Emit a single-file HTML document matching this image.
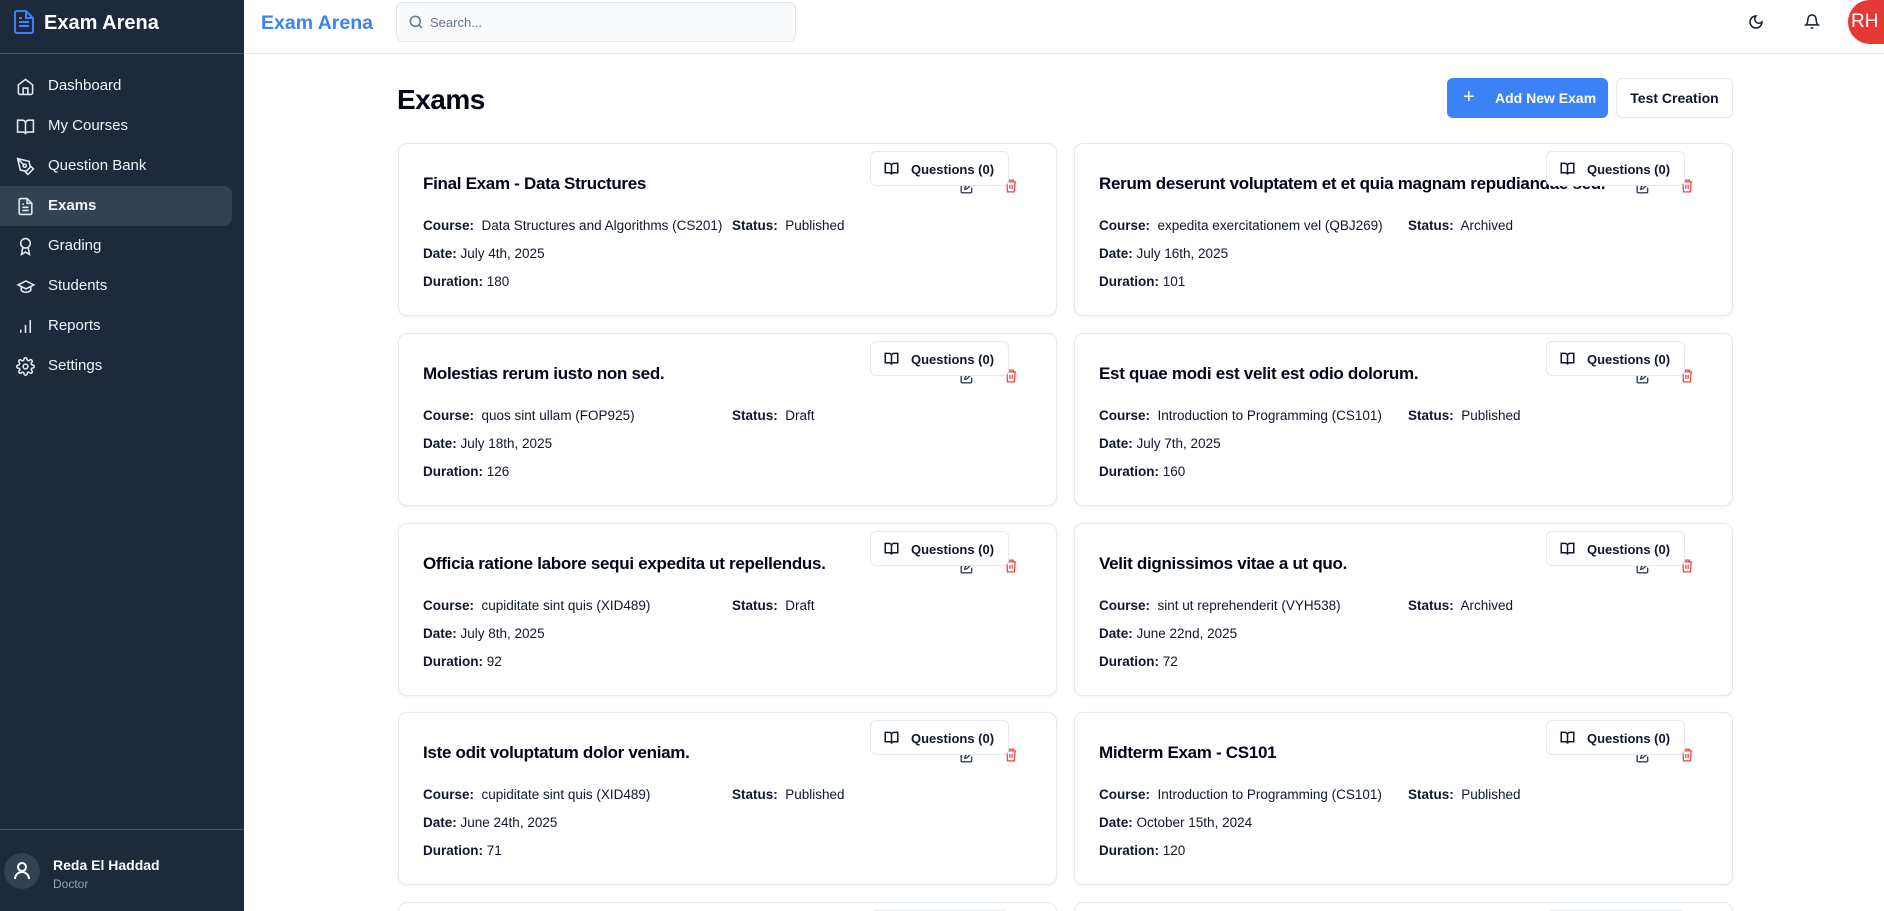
<!DOCTYPE html>
<html style="width:1884px;height:911px;overflow:hidden"><head><meta charset="utf-8"><style>
*{box-sizing:border-box;margin:0;padding:0}
body{width:1884px;height:911px;overflow:hidden;font-family:"Liberation Sans",sans-serif;background:#fff;position:relative;color:#0f172a}
#wrap{position:absolute;left:0;top:0;width:1884px;height:911px;overflow:hidden}
.sb{position:absolute;left:0;top:0;width:244px;height:911px;background:#1e293b;color:#f1f5f9}
.sb .logo{position:absolute;left:0;top:0;width:244px;height:54px;border-bottom:1px solid #475569}
.sb .logo span{position:absolute;left:44px;top:12px;font-size:20px;font-weight:bold;color:#fff}
.nav{position:absolute;left:0;width:232px;height:40px}
.nav svg{position:absolute;left:16px;top:11px}
.nav span{position:absolute;left:48px;top:11px;font-size:15px;color:#f1f5f9}
.nav.act{background:#334155;border-radius:0 8px 8px 0}
.nav.act span{font-weight:bold}
.foot{position:absolute;left:0;top:829px;width:244px;border-top:1px solid #475569;height:82px}
.hdr{position:absolute;left:244px;top:0;width:1640px;height:54px;border-bottom:1px solid #e2e8f0}
.search{position:absolute;left:396px;top:2px;width:400px;height:40px;background:#f8fafc;border:1px solid #e2e8f0;border-radius:7px}
.card{position:absolute;width:659px;height:173px;border:1px solid #e2e8f0;border-radius:9px;box-shadow:0 1px 3px rgba(0,0,0,.06);background:#fff;overflow:hidden}
.card.last{height:9px;border-bottom:none;border-radius:9px 9px 0 0;box-shadow:none}
.card h3{position:absolute;left:24px;top:30px;font-size:17px;font-weight:bold;letter-spacing:-.3px;white-space:nowrap;color:#020617}
.card .r{position:absolute;left:24px;font-size:13.5px;white-space:nowrap;color:#0f172a}
.card b{font-weight:bold}
.card .st{position:absolute;left:333px;top:74px;font-size:13.5px}
.qb{position:absolute;left:471px;top:7px;width:139px;height:35px;border:1px solid #e2e8f0;border-radius:6px;background:#fff;font-size:13px;font-weight:bold;z-index:2}
.qb svg{position:absolute;left:13px;top:10px}
.qb span{position:absolute;left:40px;top:10px}
.ed{position:absolute;left:561px;top:36px}
.tr{position:absolute;left:605px;top:34px}
</style></head><body><div id="wrap">
<div class="sb">
 <div class="logo"><svg style="position:absolute;left:14px;top:10px" width="20" height="24" viewBox="0 0 20 24" fill="none" stroke="#3b82f6" stroke-width="2"><path d="M12 1H3a2 2 0 0 0-2 2v18a2 2 0 0 0 2 2h14a2 2 0 0 0 2-2V8z"/><path d="M12 1v7h7M5 12h10M5 16h10M5 8h3"/></svg><span>Exam Arena</span></div>
 <div class="nav" style="top:66px"><svg width="19" height="19" viewBox="0 0 24 24" fill="none" stroke="#e2e8f0" stroke-width="2"><path d="M3 10l9-7 9 7v10a2 2 0 0 1-2 2H5a2 2 0 0 1-2-2z"/><path d="M9 22v-8h6v8"/></svg><span>Dashboard</span></div>
 <div class="nav" style="top:106px"><svg width="19" height="19" viewBox="0 0 24 24" fill="none" stroke="#e2e8f0" stroke-width="2"><path d="M2 4h6a4 4 0 0 1 4 4v14a3 3 0 0 0-3-3H2zM22 4h-6a4 4 0 0 0-4 4v14a3 3 0 0 1 3-3h7z"/></svg><span>My Courses</span></div>
 <div class="nav" style="top:146px"><svg width="19" height="19" viewBox="0 0 24 24" fill="none" stroke="#e2e8f0" stroke-width="2"><path d="M12 19l7-7 3 3-7 7zM18 13l-1.5-7.5L2 2l3.5 14.5L13 18zM2 2l7.6 7.6"/><circle cx="11" cy="11" r="2"/></svg><span>Question Bank</span></div>
 <div class="nav act" style="top:186px"><svg width="19" height="19" viewBox="0 0 24 24" fill="none" stroke="#e2e8f0" stroke-width="2"><path d="M14 2H6a2 2 0 0 0-2 2v16a2 2 0 0 0 2 2h12a2 2 0 0 0 2-2V8z"/><path d="M14 2v6h6M16 13H8M16 17H8M10 9H8"/></svg><span>Exams</span></div>
 <div class="nav" style="top:226px"><svg width="19" height="19" viewBox="0 0 24 24" fill="none" stroke="#e2e8f0" stroke-width="2"><circle cx="12" cy="8" r="6"/><path d="M15.5 13.5L17 22l-5-3-5 3 1.5-8.5"/></svg><span>Grading</span></div>
 <div class="nav" style="top:266px"><svg width="20" height="19" viewBox="0 0 24 24" fill="none" stroke="#e2e8f0" stroke-width="2"><path d="M22 10L12 5 2 10l10 5 10-5zM6 12v5c3 3 9 3 12 0v-5"/></svg><span>Students</span></div>
 <div class="nav" style="top:306px"><svg width="19" height="19" viewBox="0 0 24 24" fill="none" stroke="#e2e8f0" stroke-width="2"><path d="M18 20V4M12 20V10M6 20v-4"/></svg><span>Reports</span></div>
 <div class="nav" style="top:346px"><svg width="19" height="19" viewBox="0 0 24 24" fill="none" stroke="#e2e8f0" stroke-width="2"><circle cx="12" cy="12" r="3"/><path d="M19.4 15a1.7 1.7 0 0 0 .3 1.8l.1.1a2 2 0 1 1-2.8 2.8l-.1-.1a1.7 1.7 0 0 0-1.8-.3 1.7 1.7 0 0 0-1 1.5V21a2 2 0 1 1-4 0v-.1a1.7 1.7 0 0 0-1.1-1.5 1.7 1.7 0 0 0-1.8.3l-.1.1a2 2 0 1 1-2.8-2.8l.1-.1a1.7 1.7 0 0 0 .3-1.8 1.7 1.7 0 0 0-1.5-1H3a2 2 0 1 1 0-4h.1a1.7 1.7 0 0 0 1.5-1.1 1.7 1.7 0 0 0-.3-1.8l-.1-.1a2 2 0 1 1 2.8-2.8l.1.1a1.7 1.7 0 0 0 1.8.3H9a1.7 1.7 0 0 0 1-1.5V3a2 2 0 1 1 4 0v.1a1.7 1.7 0 0 0 1 1.5 1.7 1.7 0 0 0 1.8-.3l.1-.1a2 2 0 1 1 2.8 2.8l-.1.1a1.7 1.7 0 0 0-.3 1.8V9a1.7 1.7 0 0 0 1.5 1H21a2 2 0 1 1 0 4h-.1a1.7 1.7 0 0 0-1.5 1z"/></svg><span>Settings</span></div>
 <div class="foot">
  <div style="position:absolute;left:4px;top:23px;width:36px;height:36px;border-radius:50%;background:#334155"><svg style="position:absolute;left:10px;top:9px" width="16" height="18" viewBox="0 0 16 18" fill="none" stroke="#fff" stroke-width="2"><circle cx="8" cy="5" r="4"/><path d="M1 17a7 7 0 0 1 14 0"/></svg></div>
  <div style="position:absolute;left:53px;top:27px;font-size:14px;font-weight:bold;color:#fff">Reda El Haddad</div>
  <div style="position:absolute;left:53px;top:47px;font-size:12px;color:#94a3b8">Doctor</div>
 </div>
</div>
<div class="hdr">
 <div style="position:absolute;left:17px;top:12px;font-size:19.5px;font-weight:bold;color:#3b82f6">Exam Arena</div>
</div>
<div class="search"><svg style="position:absolute;left:11px;top:11px" width="16" height="16" viewBox="0 0 24 24" fill="none" stroke="#64748b" stroke-width="2.3"><circle cx="11" cy="11" r="7.5"/><path d="M21 21l-4.5-4.5"/></svg><span style="position:absolute;left:33px;top:12px;font-size:13px;color:#64748b">Search...</span></div>
<svg style="position:absolute;left:1748px;top:14px" width="16" height="16" viewBox="0 0 24 24" fill="none" stroke="#0f172a" stroke-width="2.2"><path d="M12 3a6 6 0 0 0 9 9 9 9 0 1 1-9-9z"/></svg>
<svg style="position:absolute;left:1804px;top:13px" width="16" height="17" viewBox="0 0 24 24" fill="none" stroke="#0f172a" stroke-width="2.2"><path d="M6 8a6 6 0 0 1 12 0c0 7 3 9 3 9H3s3-2 3-9M10.3 21a1.9 1.9 0 0 0 3.4 0"/></svg>
<div style="position:absolute;left:1848px;top:0px;width:36px;height:44px;border-radius:22px 0 0 22px;background:#e53935;color:#fff;font-size:19px;line-height:44px;padding-left:3px;overflow:hidden;white-space:nowrap">RH</div>
<div style="position:absolute;left:397px;top:84px;font-size:28px;font-weight:bold;color:#020617;letter-spacing:-.5px">Exams</div>
<div style="position:absolute;left:1447px;top:78px;width:161px;height:40px;background:#3b82f6;border-radius:6px;color:#fff;font-size:14px;font-weight:bold"><span style="position:absolute;left:16px;top:8px;font-size:20px;font-weight:normal">+</span><span style="position:absolute;left:48px;top:12px">Add New Exam</span></div>
<div style="position:absolute;left:1616px;top:78px;width:117px;height:40px;border:1px solid #e2e8f0;border-radius:6px;font-size:14px;font-weight:bold;text-align:center;line-height:38px">Test Creation</div>

<div id="cards"></div>
</div>
<script>
var d=[
["Final Exam - Data Structures","Data Structures and Algorithms (CS201)","Published","July 4th, 2025","180"],
["Rerum deserunt voluptatem et et quia magnam repudiandae sed.","expedita exercitationem vel (QBJ269)","Archived","July 16th, 2025","101"],
["Molestias rerum iusto non sed.","quos sint ullam (FOP925)","Draft","July 18th, 2025","126"],
["Est quae modi est velit est odio dolorum.","Introduction to Programming (CS101)","Published","July 7th, 2025","160"],
["Officia ratione labore sequi expedita ut repellendus.","cupiditate sint quis (XID489)","Draft","July 8th, 2025","92"],
["Velit dignissimos vitae a ut quo.","sint ut reprehenderit (VYH538)","Archived","June 22nd, 2025","72"],
["Iste odit voluptatum dolor veniam.","cupiditate sint quis (XID489)","Published","June 24th, 2025","71"],
["Midterm Exam - CS101","Introduction to Programming (CS101)","Published","October 15th, 2024","120"],
["","","","",""],["","","","",""]];
var tops=[143,333,523,712,902],h="";
d.forEach(function(c,i){var x=i%2?1074:398,y=tops[i>>1];
h+='<div class="card'+(c[0]?'':' last')+'" style="left:'+x+'px;top:'+y+'px">'+
'<div class="qb"><svg width="15" height="14" viewBox="0 0 24 22" fill="none" stroke="#0f172a" stroke-width="2.4"><path d="M2 2h6a4 4 0 0 1 4 4v14a3 3 0 0 0-3-3H2zM22 2h-6a4 4 0 0 0-4 4v14a3 3 0 0 1 3-3h7z"/></svg><span>Questions (0)</span></div>'+
(c[0]?'<h3>'+c[0]+'</h3>'+
'<svg class="ed" width="14" height="14" viewBox="0 0 24 24" fill="none" stroke="#334155" stroke-width="2.4"><path d="M11 4H4a2 2 0 0 0-2 2v14a2 2 0 0 0 2 2h14a2 2 0 0 0 2-2v-7"/><path d="M18.5 2.5a2.1 2.1 0 0 1 3 3L12 15l-4 1 1-4z"/></svg>'+
'<svg class="tr" width="14" height="16" viewBox="0 0 24 26" fill="none" stroke="#ef4444" stroke-width="2.2"><path d="M3 6h18M8 6V3h8v3M5 6l1 17h12l1-17M10 11v7M14 11v7"/></svg>'+
'<div class="r" style="top:74px"><b>Course:</b>&nbsp; '+c[1]+'</div><div class="st"><b>Status:</b>&nbsp; '+c[2]+'</div>'+
'<div class="r" style="top:102px"><b>Date:</b> '+c[3]+'</div>'+
'<div class="r" style="top:130px"><b>Duration:</b> '+c[4]+'</div>':'')+'</div>';});
document.getElementById('cards').innerHTML=h;
</script>
</body></html>
